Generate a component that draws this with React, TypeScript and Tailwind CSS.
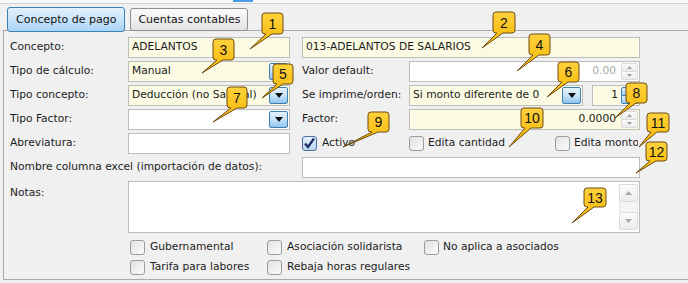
import React from "react";

const Tri = ({ up = false, color = "#000", w = 7, h = 4 }: { up?: boolean; color?: string; w?: number; h?: number }) => (
  <svg width={w} height={h} viewBox={`0 0 ${w} ${h}`}>
    <path d={up ? `M0 ${h} L${w / 2} 0 L${w} ${h}Z` : `M0 0 L${w} 0 L${w / 2} ${h}Z`} fill={color} />
  </svg>
);

function DropBtn() {
  return (
    <div className="w-[19px] shrink-0 my-px mr-px rounded-[2px] border border-[#3c7fb1] bg-linear-to-b from-[#e6f3fd] via-[#c6e3fa] to-[#8fc4ef] flex items-center justify-center">
      <Tri w={8} h={5} color="#111" />
    </div>
  );
}

function Spinner({ blue = false }: { blue?: boolean }) {
  const cls = blue
    ? "border-[#3c7fb1] bg-linear-to-b from-[#e3f1fc] to-[#9ccbf2]"
    : "border-[#dadada] bg-linear-to-b from-[#fbfbfb] to-[#ececec]";
  const tc = blue ? "#111" : "#a0a0a0";
  return (
    <div className="w-[17px] shrink-0 flex flex-col my-px mr-px">
      <div className={`flex-1 border ${cls} rounded-t-[2px] flex items-center justify-center`}>
        <Tri up w={5} h={3} color={tc} />
      </div>
      <div className={`flex-1 border border-t-0 ${cls} rounded-b-[2px] flex items-center justify-center`}>
        <Tri w={5} h={3} color={tc} />
      </div>
    </div>
  );
}

function Cb({ checked = false }: { checked?: boolean }) {
  return (
    <div
      className={`w-[15px] h-[15px] shrink-0 rounded-[3px] border flex items-center justify-center ${
        checked
          ? "border-[#4d6f9f] bg-linear-to-b from-[#e4f0fb] to-[#bcd6ef]"
          : "border-[#9c9c9c] bg-linear-to-br from-[#e2e2e2] to-[#fbfbfb]"
      }`}
    >
      {checked && (
        <svg width="13" height="13" viewBox="0 0 13 13">
          <path d="M2 6.5 L5 10 L11 1.5" stroke="#1b2b63" strokeWidth="2.2" fill="none" />
        </svg>
      )}
    </div>
  );
}

const Label = ({ children, w = "w-[118px]" }: { children: React.ReactNode; w?: string }) => (
  <div className={`${w} shrink-0 whitespace-nowrap`}>{children}</div>
);

const box = "h-[21px] border border-[#bdbdbd] flex items-stretch";
const tbox = "h-[21px] border border-[#bdbdbd] flex items-center pl-[3px]";
const yellow = "bg-[#fbfbe3]";
const white = "bg-white";

type C = { n: string; x: number; y: number; w: number; h: number; tx: number; ty: number };
const callouts: C[] = [
  { n: "1", x: 262, y: 13, w: 21, h: 21, tx: 250, ty: 49 },
  { n: "2", x: 493, y: 12, w: 22, h: 21, tx: 482, ty: 48 },
  { n: "3", x: 213, y: 39, w: 21, h: 21, tx: 202, ty: 73 },
  { n: "4", x: 529, y: 34, w: 21, h: 21, tx: 517, ty: 71 },
  { n: "5", x: 273, y: 64, w: 20, h: 20, tx: 262, ty: 98 },
  { n: "6", x: 558, y: 62, w: 21, h: 20, tx: 547, ty: 97 },
  { n: "7", x: 227, y: 87, w: 20, h: 21, tx: 213, ty: 122 },
  { n: "8", x: 626, y: 83, w: 21, h: 20, tx: 615, ty: 118 },
  { n: "9", x: 368, y: 112, w: 21, h: 20, tx: 343, ty: 147 },
  { n: "10", x: 521, y: 108, w: 22, h: 20, tx: 509, ty: 147 },
  { n: "11", x: 647, y: 113, w: 22, h: 19, tx: 639, ty: 147 },
  { n: "12", x: 646, y: 142, w: 21, h: 19, tx: 636, ty: 173 },
  { n: "13", x: 584, y: 188, w: 22, h: 19, tx: 572, ty: 223 },
];

function calloutPath(c: C) {
  const r = 3;
  const { x, y, w, h } = c;
  return `M${x + r} ${y} H${x + w - r} Q${x + w} ${y} ${x + w} ${y + r} V${y + h - r} Q${x + w} ${y + h} ${x + w - r} ${y + h} H${x + 10} L${c.tx} ${c.ty} L${x + 4} ${y + h} H${x + r} Q${x} ${y + h} ${x} ${y + h - r} V${y + r} Q${x} ${y} ${x + r} ${y} Z`;
}

export default function App() {
  return (
    <div className="relative w-[688px] h-[283px] overflow-hidden bg-[#f0f0f0] text-[#1c1c1c] font-['DejaVu_Sans',sans-serif] text-[10.7px] leading-none">
      {/* top strip */}
      <div className="h-[4px] bg-[#f8f8f8] border-b border-[#d3d3d3] flex">
        <div className="ml-[233px] w-[20px] h-[2px] bg-[#4a9ae8]" />
      </div>
      {/* tabs */}
      <div className="relative z-10 h-[28px] -mb-[2px] flex items-end gap-[5px] pl-[7px]">
        <div className="h-[25px] px-[8px] flex items-center rounded-[3px] border border-[#3c7fb1] bg-linear-to-b from-[#e3f1fc] via-[#c9e4f9] to-[#a9d3f4] text-[11px] text-[#111]">
          Concepto de pago
        </div>
        <div className="h-[23px] mb-px px-[7px] flex items-center rounded-[3px] border border-[#8f8f8f] bg-linear-to-b from-[#fbfbfb] to-[#e4e4e4] text-[11px] text-[#111]">
          Cuentas contables
        </div>
      </div>
      {/* panel */}
      <div className="ml-[3px] border-l border-t border-b border-[#a9a9a9] pl-[6px] pt-[6px] pb-[2px] flex flex-col gap-[3px]">
        {/* row 1 */}
        <div className="flex items-center">
          <Label>Concepto:</Label>
          <div className={`${tbox} ${yellow} w-[162px]`}>ADELANTOS</div>
          <div className={`${tbox} ${yellow} w-[338px] ml-[12px]`}>013-ADELANTOS DE SALARIOS</div>
        </div>
        {/* row 2 */}
        <div className="flex items-center">
          <Label>Tipo de cálculo:</Label>
          <div className={`${box} ${yellow} w-[162px]`}>
            <div className="flex-1 flex items-center pl-[3px]">Manual</div>
            <DropBtn />
          </div>
          <Label w="w-[107px] ml-[12px]">Valor default:</Label>
          <div className={`${box} ${white} w-[231px]`}>
            <div className="flex-1 flex items-center justify-end pr-[5px] text-[#a8a8a8]">0.00</div>
            <Spinner />
          </div>
        </div>
        {/* row 3 */}
        <div className="flex items-center">
          <Label>Tipo concepto:</Label>
          <div className={`${box} ${yellow} w-[162px]`}>
            <div className="flex-1 flex items-center pl-[3px] overflow-hidden whitespace-nowrap">Deducción (no Salarial)</div>
            <DropBtn />
          </div>
          <Label w="w-[107px] ml-[12px]">Se imprime/orden:</Label>
          <div className={`${box} ${yellow} w-[174px]`}>
            <div className="flex-1 flex items-center pl-[3px] whitespace-nowrap">Si monto diferente de 0</div>
            <DropBtn />
          </div>
          <div className={`${box} ${yellow} w-[48px] ml-[9px]`}>
            <div className="flex-1 flex items-center justify-end pr-[3px]">1</div>
            <Spinner blue />
          </div>
        </div>
        {/* row 4 */}
        <div className="flex items-center">
          <Label>Tipo Factor:</Label>
          <div className={`${box} ${white} w-[162px]`}>
            <div className="flex-1" />
            <DropBtn />
          </div>
          <Label w="w-[107px] ml-[12px]">Factor:</Label>
          <div className={`${box} ${yellow} w-[231px]`}>
            <div className="flex-1 flex items-center justify-end pr-[5px]">0.0000</div>
            <Spinner />
          </div>
        </div>
        {/* row 5 */}
        <div className="flex items-center">
          <Label>Abreviatura:</Label>
          <div className={`${box} ${white} w-[162px]`} />
          <div className="ml-[12px] w-[107px] flex items-center gap-[5px]">
            <Cb checked />
            <span>Activo</span>
          </div>
          <div className="w-[146px] flex items-center gap-[4px]">
            <Cb />
            <span>Edita cantidad</span>
          </div>
          <div className="w-[83px] flex items-center gap-[4px] overflow-hidden whitespace-nowrap">
            <Cb />
            <span>Edita monto</span>
          </div>
        </div>
        {/* row 6 */}
        <div className="flex items-center">
          <Label w="w-[292px]">Nombre columna excel (importación de datos):</Label>
          <div className={`${box} ${white} w-[338px]`} />
        </div>
        {/* notas */}
        <div className="flex items-start">
          <Label w="w-[118px] pt-[7px]">Notas:</Label>
          <div className="h-[52px] w-[512px] border border-[#bdbdbd] bg-white flex justify-end">
            <div className="w-[19px] my-[2px] mr-px flex flex-col">
              <div className="h-[18px] border border-[#dadada] bg-linear-to-b from-[#fbfbfb] to-[#ededed] rounded-[2px] flex items-center justify-center">
                <Tri up w={7} h={4} color="#a8a8a8" />
              </div>
              <div className="flex-1 bg-[#f4f4f4] border-x border-[#e6e6e6]" />
              <div className="h-[18px] border border-[#dadada] bg-linear-to-b from-[#fbfbfb] to-[#ededed] rounded-[2px] flex items-center justify-center">
                <Tri w={7} h={4} color="#a8a8a8" />
              </div>
            </div>
          </div>
        </div>
        {/* checkbox rows */}
        <div className="mt-[1px] flex flex-col pl-[120px]">
          <div className="h-[20px] flex items-center">
            <div className="w-[137px] flex items-center gap-[5px]">
              <Cb />
              <span>Gubernamental</span>
            </div>
            <div className="w-[157px] flex items-center gap-[5px]">
              <Cb />
              <span>Asociación solidarista</span>
            </div>
            <div className="flex items-center gap-[4px]">
              <Cb />
              <span>No aplica a asociados</span>
            </div>
          </div>
          <div className="h-[20px] flex items-center">
            <div className="w-[137px] flex items-center gap-[5px]">
              <Cb />
              <span>Tarifa para labores</span>
            </div>
            <div className="w-[145px] flex items-center gap-[5px] overflow-hidden whitespace-nowrap">
              <Cb />
              <span>Rebaja horas regulares</span>
            </div>
          </div>
        </div>
      </div>
      {/* callouts */}
      <svg className="absolute inset-0 pointer-events-none" width={688} height={283} viewBox="0 0 688 283">
        <defs>
          <linearGradient id="gold" x1="0" y1="0" x2="0" y2="1">
            <stop offset="0" stopColor="#ffd23c" />
            <stop offset="1" stopColor="#f4b400" />
          </linearGradient>
        </defs>
        {callouts.map((c) => (
          <g key={c.n}>
            <path d={calloutPath(c)} fill="url(#gold)" stroke="#6e4a12" strokeWidth={1} strokeLinejoin="round" />
            <text
              x={c.x + c.w / 2}
              y={c.y + c.h / 2 + 5}
              textAnchor="middle"
              fontFamily="'Liberation Sans', Arial, sans-serif"
              fontSize={14}
              fill="#111"
            >
              {c.n}
            </text>
          </g>
        ))}
      </svg>
    </div>
  );
}
